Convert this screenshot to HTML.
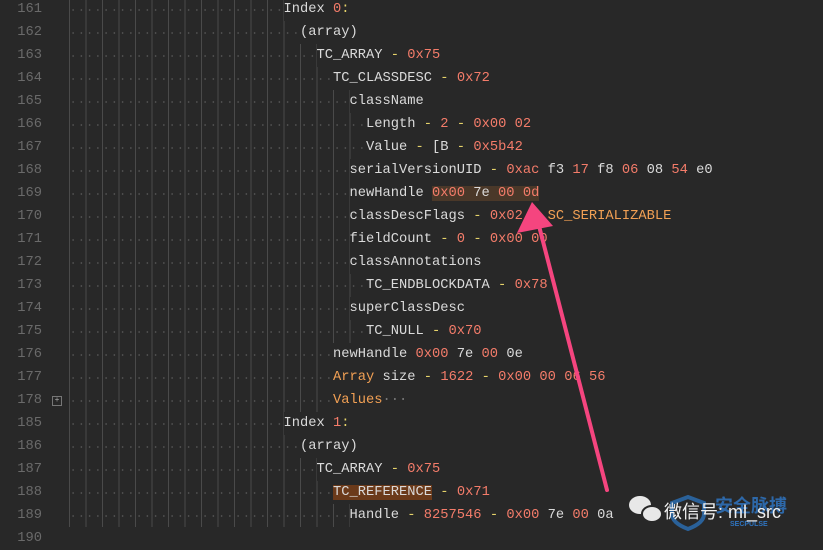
<!DOCTYPE html>
<html><head><meta charset="utf-8"><style>
body{margin:0;width:823px;height:549px;background:#282828;overflow:hidden;position:relative;font-family:"Liberation Mono",monospace;font-size:13.75px;color:#dadada}
.r{position:absolute;left:0;height:23px;line-height:23px;white-space:pre;width:823px}
.n{position:absolute;left:0;width:42px;text-align:right;color:#6a6a6a}
.c{position:absolute;left:69px;top:0}
.i{display:inline-block;height:23px;vertical-align:top;background-image:repeating-linear-gradient(to right,#4a4a4a 0 1px,transparent 1px 16.5px),radial-gradient(circle at 4.1px 12px,#555 0 0.7px,transparent 1px);background-size:auto,8.25px 23px}
.y{color:#e6d36a}.o{color:#f47c6a}.k{color:#f2a054}
.h{background:#4a3829}.h2{background:#6b3a1a}
</style></head><body>
<div class="r" style="top:-2px"><span class="n">161</span><span class="c"><span class="i" style="width:214.5px"></span>Index <span class="o">0</span><span class="y">:</span></span></div>
<div class="r" style="top:21px"><span class="n">162</span><span class="c"><span class="i" style="width:231px"></span>(array)</span></div>
<div class="r" style="top:44px"><span class="n">163</span><span class="c"><span class="i" style="width:247.5px"></span>TC_ARRAY <span class="y">-</span> <span class="o">0x75</span></span></div>
<div class="r" style="top:67px"><span class="n">164</span><span class="c"><span class="i" style="width:264px"></span>TC_CLASSDESC <span class="y">-</span> <span class="o">0x72</span></span></div>
<div class="r" style="top:90px"><span class="n">165</span><span class="c"><span class="i" style="width:280.5px"></span>className</span></div>
<div class="r" style="top:113px"><span class="n">166</span><span class="c"><span class="i" style="width:297px"></span>Length <span class="y">-</span> <span class="o">2</span> <span class="y">-</span> <span class="o">0x00</span> <span class="o">02</span></span></div>
<div class="r" style="top:136px"><span class="n">167</span><span class="c"><span class="i" style="width:297px"></span>Value <span class="y">-</span> [B <span class="y">-</span> <span class="o">0x5b42</span></span></div>
<div class="r" style="top:159px"><span class="n">168</span><span class="c"><span class="i" style="width:280.5px"></span>serialVersionUID <span class="y">-</span> <span class="o">0xac</span> f3 <span class="o">17</span> f8 <span class="o">06</span> 08 <span class="o">54</span> e0</span></div>
<div class="r" style="top:182px"><span class="n">169</span><span class="c"><span class="i" style="width:280.5px"></span>newHandle <span class="h"><span class="o">0x00</span> 7e <span class="o">00</span> <span class="o">0d</span></span></span></div>
<div class="r" style="top:205px"><span class="n">170</span><span class="c"><span class="i" style="width:280.5px"></span>classDescFlags <span class="y">-</span> <span class="o">0x02</span> <span class="y">-</span> <span class="k">SC_SERIALIZABLE</span></span></div>
<div class="r" style="top:228px"><span class="n">171</span><span class="c"><span class="i" style="width:280.5px"></span>fieldCount <span class="y">-</span> <span class="o">0</span> <span class="y">-</span> <span class="o">0x00</span> <span class="o">00</span></span></div>
<div class="r" style="top:251px"><span class="n">172</span><span class="c"><span class="i" style="width:280.5px"></span>classAnnotations</span></div>
<div class="r" style="top:274px"><span class="n">173</span><span class="c"><span class="i" style="width:297px"></span>TC_ENDBLOCKDATA <span class="y">-</span> <span class="o">0x78</span></span></div>
<div class="r" style="top:297px"><span class="n">174</span><span class="c"><span class="i" style="width:280.5px"></span>superClassDesc</span></div>
<div class="r" style="top:320px"><span class="n">175</span><span class="c"><span class="i" style="width:297px"></span>TC_NULL <span class="y">-</span> <span class="o">0x70</span></span></div>
<div class="r" style="top:343px"><span class="n">176</span><span class="c"><span class="i" style="width:264px"></span>newHandle <span class="o">0x00</span> 7e <span class="o">00</span> 0e</span></div>
<div class="r" style="top:366px"><span class="n">177</span><span class="c"><span class="i" style="width:264px"></span><span class="k">Array</span> size <span class="y">-</span> <span class="o">1622</span> <span class="y">-</span> <span class="o">0x00</span> <span class="o">00</span> <span class="o">06</span> <span class="o">56</span></span></div>
<div class="r" style="top:389px"><span class="n">178</span><span style="position:absolute;left:52px;top:7px;width:8px;height:8px;border:1px solid #777;font-size:8px;line-height:8px;text-align:center;color:#aaa">+</span><span class="c"><span class="i" style="width:264px"></span><span class="k">Values</span><span style="color:#777">···</span></span></div>
<div class="r" style="top:412px"><span class="n">185</span><span class="c"><span class="i" style="width:214.5px"></span>Index <span class="o">1</span><span class="y">:</span></span></div>
<div class="r" style="top:435px"><span class="n">186</span><span class="c"><span class="i" style="width:231px"></span>(array)</span></div>
<div class="r" style="top:458px"><span class="n">187</span><span class="c"><span class="i" style="width:247.5px"></span>TC_ARRAY <span class="y">-</span> <span class="o">0x75</span></span></div>
<div class="r" style="top:481px"><span class="n">188</span><span class="c"><span class="i" style="width:264px"></span><span class="h2">TC_REFERENCE</span> <span class="y">-</span> <span class="o">0x71</span></span></div>
<div class="r" style="top:504px"><span class="n">189</span><span class="c"><span class="i" style="width:280.5px"></span>Handle <span class="y">-</span> <span class="o">8257546</span> <span class="y">-</span> <span class="o">0x00</span> 7e <span class="o">00</span> 0a</span></div>
<div class="r" style="top:527px"><span class="n">190</span></div>
<svg style="position:absolute;left:0;top:0" width="823" height="549">
<line x1="607" y1="490" x2="538" y2="222" stroke="#f5457f" stroke-width="4" stroke-linecap="round"/>
<polygon points="532,202 517,233 553,226" fill="#f5457f"/>
<path d="M688 497 l16 6 v11 q0 9 -16 15 q-16 -6 -16 -15 v-11z" fill="none" stroke="#2a6fb5" stroke-width="4" opacity="0.8"/>
<ellipse cx="640" cy="505" rx="11" ry="9" fill="#e8e8e8"/>
<ellipse cx="652" cy="514" rx="10" ry="8" fill="#e8e8e8" stroke="#282828" stroke-width="2"/>
<text x="715" y="512" font-family="Noto Sans CJK SC,sans-serif" font-size="18" font-weight="bold" fill="#2f74c0" opacity="0.85">安全脉搏</text>
<text x="730" y="526" font-family="Liberation Sans,sans-serif" font-size="7" font-weight="bold" fill="#2f74c0">SECPULSE</text>
<text x="664" y="518" font-family="Liberation Sans,Noto Sans CJK SC,sans-serif" font-size="18" fill="#f0f0f0">微信号: ml_src</text>
</svg>
</body></html>
